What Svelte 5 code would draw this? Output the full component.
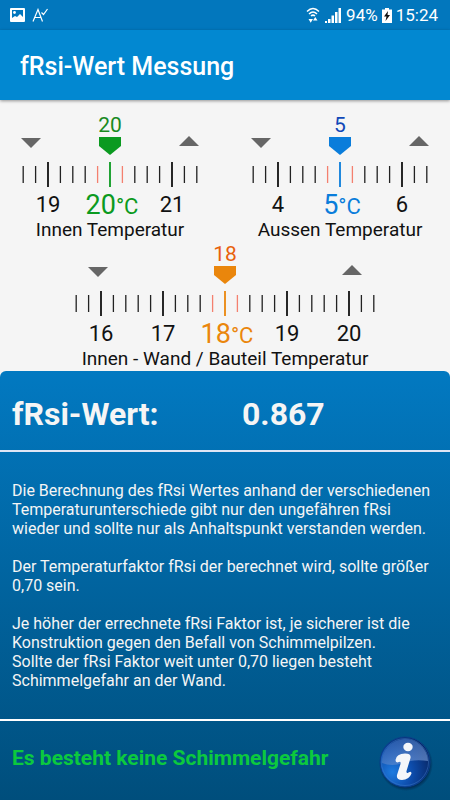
<script lang="ts">
  type Gauge = {
    id: string;
    label: string;
    value: number;
    tone: string;
    range: number;
    side: number;
  };

  let gauges = $state<Gauge[]>([
    { id: 'inside', label: 'Innen Temperatur', value: 20, tone: 'green', range: 1, side: 7 },
    { id: 'outside', label: 'Aussen Temperatur', value: 5, tone: 'blue', range: 1, side: 7 },
    { id: 'wall', label: 'Innen - Wand / Bauteil Temperatur', value: 18, tone: 'orange', range: 2, side: 12 },
  ]);

  // Distance between two full degrees, five tick steps each
  const DEGREE = 62;
  const STEP = DEGREE / 5;

  const frsi = $derived(
    (gauges[2].value - gauges[1].value) / (gauges[0].value - gauges[1].value)
  );

  function span(n: number) {
    return Array.from({ length: n * 2 + 1 }, (_, i) => i - n);
  }
</script>

{#snippet dial(g: Gauge)}
  {@const w = DEGREE * (g.range * 2 + 1)}
  <div class="gauge {g.tone}">
    <div class="top" class:wide={g.range > 1}>
      <button class="step" aria-label="{g.label} −" onclick={() => g.value--}>
        <svg width="22" height="12" viewBox="0 0 22 12"><path d="M1 1h20L11 11z" /></svg>
      </button>
      <output class="current" for={g.id}>{g.value}</output>
      <button class="step up" aria-label="{g.label} +" onclick={() => g.value++}>
        <svg width="22" height="12" viewBox="0 0 22 12"><path d="M1 11h20L11 1z" /></svg>
      </button>
    </div>
    <div class="scale">
      <svg width={w} height="50" viewBox="0 0 {w} 50">
        <path class="marker" d="M{w / 2 - 11} 0h22v9l-11 9l-11 -9z" />
        {#each span(g.side) as i}
          <line
            class:major={i % 5 === 0}
            class:near={Math.abs(i) === 1}
            class:center={i === 0}
            x1={w / 2 + i * STEP}
            x2={w / 2 + i * STEP}
            y1={i % 5 === 0 ? 25 : 29}
            y2={i % 5 === 0 ? 50 : 46}
          />
        {/each}
      </svg>
      <input id={g.id} type="range" min="-20" max="40" bind:value={g.value} />
    </div>
    <div class="numbers">
      {#each span(g.range) as i}
        {#if i === 0}
          <span class="big">{g.value}<small>°C</small></span>
        {:else}
          <span>{g.value + i}</span>
        {/if}
      {/each}
    </div>
    <label for={g.id}>{g.label}</label>
  </div>
{/snippet}

<div class="app">
  <div class="status">
    <svg width="15" height="14" viewBox="0 0 15 14">
      <path fill="#fff" fill-rule="evenodd" d="M1 0h13q1 0 1 1v12q0 1-1 1H1q-1 0-1-1V1q0-1 1-1zM2 2v8l3-2 2 1 3-3 3 3V2z" />
      <circle cx="4.5" cy="4.5" r="1.4" fill="#fff" />
    </svg>
    <svg class="spell" width="17" height="14" viewBox="0 0 17 14" fill="none" stroke="#fff" stroke-width="1.2">
      <path d="M1 13.500L6 1.500L10.500 13.500M3 9.500h6.200M9.500 4.500l2 2L15.500 1" />
    </svg>
    <svg class="wifi" width="14" height="16" viewBox="0 0 14 16" fill="none" stroke="#fff" stroke-width="1.500">
      <path d="M1 4.500Q7-1.500 13 4.500M3 7Q7 3 11 7M5 9Q7 7.200 9 9" />
      <path d="M2.500 12h4.500L4.700 15.800zM7 13.500h4.500L9.300 10z" fill="#fff" stroke="none" />
    </svg>
    <svg class="signal" width="16" height="15" viewBox="0 0 16 15" fill="#fff">
      <path d="M0 13h2v2H0zM3 11h2.500v4H3zM6.500 7.500h2.500v7.500H6.500zM10 4h2.500v11H10z" />
      <path d="M13.500 0H16v15h-2.500z" />
    </svg>
    <span>94%</span>
    <svg width="10" height="15" viewBox="0 0 10 15">
      <path fill="#fff" d="M3 0h4v1.500h3V15H0V1.500h3z" />
      <path fill="#111" d="M6 3L2 8.500h2.500L3.500 13L8 7H5.500z" />
    </svg>
    <span>15:24</span>
  </div>

  <header><h1>fRsi-Wert Messung</h1></header>

  <main>
    <div class="pair">
      {@render dial(gauges[0])}
      {@render dial(gauges[1])}
    </div>
    {@render dial(gauges[2])}
  </main>

  <section class="panel">
    <div class="result">
      <h2>fRsi-Wert:</h2>
      <strong>{frsi.toFixed(3)}</strong>
    </div>
    <div class="info">
      <p>Die Berechnung des fRsi Wertes anhand der verschiedenen Temperaturunterschiede gibt nur den ungefähren fRsi wieder und sollte nur als Anhaltspunkt verstanden werden.</p>
      <p>Der Temperaturfaktor fRsi der berechnet wird, sollte größer 0,70 sein.</p>
      <p>Je höher der errechnete fRsi Faktor ist, je sicherer ist die Konstruktion gegen den Befall von Schimmelpilzen.<br />Sollte der fRsi Faktor weit unter 0,70 liegen besteht Schimmelgefahr an der Wand.</p>
    </div>
    <footer>
      <span>Es besteht keine Schimmelgefahr</span>
      <button class="about" aria-label="Info">
        <svg width="56" height="56" viewBox="0 0 56 56">
          <defs>
            <radialGradient id="ball" cx="0.25" cy="0.7" r="0.8">
              <stop offset="0" stop-color="#1e7be0" />
              <stop offset="0.5" stop-color="#0d4cab" />
              <stop offset="1" stop-color="#082766" />
            </radialGradient>
            <linearGradient id="shine" x1="0" y1="0" x2="1" y2="1">
              <stop offset="0" stop-color="#2c66bd" />
              <stop offset="1" stop-color="#7f9fd6" />
            </linearGradient>
            <radialGradient id="shade">
              <stop offset="0.84" stop-color="#00183a" stop-opacity="0.7" />
              <stop offset="1" stop-color="#00183a" stop-opacity="0" />
            </radialGradient>
          </defs>
          <circle cx="29" cy="29" r="27" fill="url(#shade)" />
          <circle cx="28" cy="27" r="25" fill="url(#ball)" stroke="#0b3f8c" />
          <path d="M5 28A23 23 0 0 1 51 26Q36 24 26 28Q15 32 5 28z" fill="url(#shine)" opacity="0.65" />
          <circle cx="28" cy="27" r="23.500" fill="none" stroke="#3f7cc9" stroke-width="0.8" opacity="0.6" />
          <g fill="#f4f6fa">
            <ellipse cx="31" cy="12" rx="4.700" ry="4.200" />
            <path d="M18.500 25Q19.500 18.500 28 18.500Q34.500 18.500 33.500 23L29.500 36Q29 39 31.500 37.500Q34.500 35.500 34.500 38.500Q32 45 25 45Q19 45 20 40L23.500 29Q24 26 22 27Q18.500 28.500 18.500 25z" />
          </g>
        </svg>
      </button>
    </footer>
  </section>
</div>

<style>
  :global(body) {
    margin: 0;
    font-family: Roboto, sans-serif;
    background: #f5f5f5;
  }
  .app {
    display: flex;
    flex-direction: column;
    min-height: 100vh;
  }
  button {
    padding: 0;
    border: 0;
    background: none;
    cursor: pointer;
  }
  svg { display: block; }
  h1, h2, p { margin: 0; }

  .status {
    display: flex;
    align-items: center;
    height: 30px;
    padding: 0 12px 0 10px;
    background: #0277bd;
    color: #fff;
    font-size: 17px;
  }
  .spell { margin-left: 7px; }
  .wifi { margin-left: auto; }
  .signal { margin: 0 5px 0 5px; }
  .status span + svg { margin: 0 4px; }

  header {
    display: flex;
    align-items: center;
    height: 70px;
    padding: 2px 20px 0;
    box-sizing: border-box;
    background: #0288d1;
    color: #fff;
    box-shadow: 0 1px 3px rgba(0, 0, 0, 0.4);
  }
  h1 {
    font-size: 25px;
    font-weight: 500;
  }

  main { padding-top: 13px; }
  .pair {
    display: grid;
    grid-template-columns: 1fr 1fr;
    gap: 10px;
  }

  /* Gauges */
  .gauge {
    display: flex;
    flex-direction: column;
    align-items: center;
    height: 129px;
    color: #111;
  }
  .green { --tone: #0b9a20; --value: #1a8a1f; }
  .blue { --tone: #0a7ddb; --value: #1148b8; }
  .orange { --tone: #ea860c; --value: #e8610c; }
  .top {
    display: flex;
    justify-content: space-between;
    width: 180px;
    height: 24px;
  }
  .top.wide { width: 276px; }
  .current {
    color: var(--value);
    font-size: 21px;
    line-height: 24px;
  }
  .step {
    height: 12px;
    margin-top: 24px;
  }
  .step.up { margin-top: 22px; }
  .step path { fill: #666; }
  .scale { position: relative; }
  .scale input {
    position: absolute;
    inset: 24px 0 0;
    width: 100%;
    margin: 0;
    opacity: 0;
  }
  .marker { fill: var(--tone); }
  line {
    stroke: #222;
    stroke-width: 1.3;
  }
  line.major { stroke: #111; stroke-width: 1.8; }
  line.near { stroke: #f4806f; }
  line.center { stroke: var(--tone); }
  .numbers {
    display: grid;
    grid-auto-flow: column;
    grid-auto-columns: 62px;
    height: 33px;
    font-size: 22px;
    line-height: 36px;
  }
  .numbers span {
    display: flex;
    justify-content: center;
    align-items: baseline;
    white-space: nowrap;
  }
  .numbers .big {
    padding-left: 4px;
    color: var(--tone);
    font-size: 27px;
  }
  small { font-size: 22px; }
  label {
    font-size: 19px;
    line-height: 20px;
    white-space: nowrap;
  }

  /* Result panel */
  .panel {
    flex: 1;
    display: flex;
    flex-direction: column;
    border-radius: 6px 6px 0 0;
    background: linear-gradient(#0279c1, #004e7c);
    color: #f5f5f5;
  }
  .result {
    display: grid;
    grid-template-columns: 230px 1fr;
    align-items: center;
    height: 81px;
    padding: 6px 12px 0;
    box-sizing: border-box;
    border-bottom: 2px solid #dfe6f5;
    font-size: 32px;
  }
  h2 { font-size: 32px; }
  .info {
    flex: 1;
    display: flex;
    flex-direction: column;
    gap: 19px;
    padding: 29px 12px 27px;
    font-size: 16px;
    line-height: 19px;
  }
  footer {
    display: flex;
    align-items: center;
    justify-content: space-between;
    height: 81px;
    padding: 0 17px 6px 12px;
    box-sizing: border-box;
    border-top: 2px solid #fff;
    color: #0cc93e;
    font-size: 21px;
    font-weight: 700;
  }
  .about { margin-top: 10px; }
</style>
